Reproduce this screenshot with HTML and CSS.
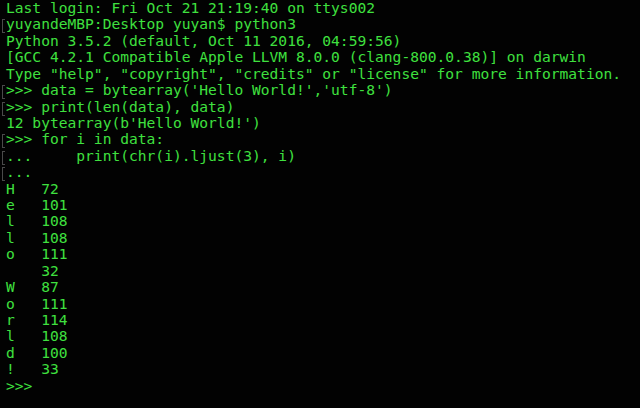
FILE: index.html
```html
<!DOCTYPE html>
<html lang="en">
<head>
  <meta charset="UTF-8">
  <meta name="viewport" content="width=device-width, initial-scale=1.0">
  <title>Terminal</title>
  <link rel="stylesheet" href="styles.css">
</head>
<body>

  <div class="terminal">
    <div class="line">Last login: Fri Oct 21 21:19:40 on ttys002</div>
    <div class="line mark">yuyandeMBP:Desktop yuyan$ python3</div>
    <div class="line">Python 3.5.2 (default, Oct 11 2016, 04:59:56)</div>
    <div class="line">[GCC 4.2.1 Compatible Apple LLVM 8.0.0 (clang-800.0.38)] on darwin</div>
    <div class="line">Type "help", "copyright", "credits" or "license" for more information.</div>
    <div class="line mark">&gt;&gt;&gt; data = bytearray('Hello World!','utf-8')</div>
    <div class="line mark">&gt;&gt;&gt; print(len(data), data)</div>
    <div class="line">12 bytearray(b'Hello World!')</div>
    <div class="line mark">&gt;&gt;&gt; for i in data:</div>
    <div class="line mark">...     print(chr(i).ljust(3), i)</div>
    <div class="line mark">...</div>
    <!-- output rows -->
    <div class="line">H   72</div>
    <div class="line">e   101</div>
    <div class="line">l   108</div>
    <div class="line">l   108</div>
    <div class="line">o   111</div>
    <div class="line">    32</div>
    <div class="line">W   87</div>
    <div class="line">o   111</div>
    <div class="line">r   114</div>
    <div class="line">l   108</div>
    <div class="line">d   100</div>
    <div class="line">!   33</div>
    <div class="line">&gt;&gt;&gt;</div>
  </div>

</body>
</html>
```

FILE: styles.css
```css
/* Terminal window */
body {
  margin: 0;
  background-color: #000;
}
.terminal {
  height: 408px;
  padding: 0 0 0 6px;
  background-color: #020202;
  color: #3fe03f;
  font-family: "DejaVu Sans Mono", "Liberation Mono", monospace;
  font-size: 14.6px;
  line-height: 16.43px;
  overflow: hidden;
}
.line {
  position: relative;
  white-space: pre;
  height: 16.43px;
}
/* gray marks the terminal puts beside commands */
.mark::before {
  content: "";
  position: absolute;
  left: -4px;
  top: 3px;
  width: 2px;
  height: 12px;
  border: 1px solid #4a4a4a;
  border-right: none;
}
```
